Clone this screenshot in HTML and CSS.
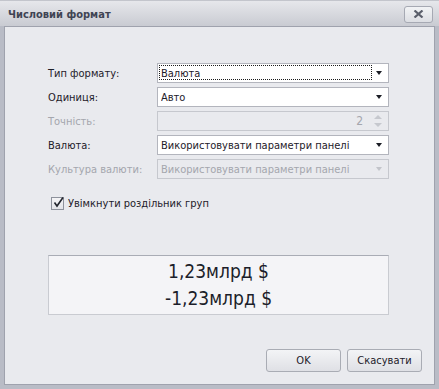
FILE: index.html
```html
<!DOCTYPE html>
<html lang="uk">
<head>
<meta charset="utf-8">
<title>Числовий формат</title>
<link rel="stylesheet" href="styles.css">
</head>
<body>
<div class="window">
  <div class="titlebar">
    <span class="title">Числовий формат</span>
    <button class="close" aria-label="Закрити">
      <svg width="11" height="8" viewBox="0 0 11 8"><path d="M1.5 0.5 L9.5 7.5 M9.5 0.5 L1.5 7.5" stroke="#5b5f6b" stroke-width="2.2" fill="none"/></svg>
    </button>
  </div>
  <div class="client">
    <div class="form">
      <label class="lbl">Тип формату:</label>
      <div class="combo focused"><span class="val">Валюта</span><span class="arrow"></span></div>

      <label class="lbl">Одиниця:</label>
      <div class="combo"><span class="val">Авто</span><span class="arrow"></span></div>

      <label class="lbl disabled">Точність:</label>
      <div class="combo spin disabled"><span class="val num">2</span><span class="spinbtns"><span class="up"></span><span class="down"></span></span></div>

      <label class="lbl">Валюта:</label>
      <div class="combo"><span class="val">Використовувати параметри панелі</span><span class="arrow"></span></div>

      <label class="lbl disabled">Культура валюти:</label>
      <div class="combo disabled"><span class="val">Використовувати параметри панелі</span><span class="arrow"></span></div>
    </div>

    <div class="check">
      <span class="box">
        <svg width="13" height="13" viewBox="0 0 13 13"><path d="M2.5 6.5 L5 10 L11 1.5" stroke="#23262e" stroke-width="1.6" fill="none"/></svg>
      </span>
      <span>Увімкнути роздільник груп</span>
    </div>

    <div class="preview">
      <div>1,23млрд $</div>
      <div>-1,23млрд $</div>
    </div>

    <div class="buttons">
      <button class="btn">OK</button>
      <button class="btn">Скасувати</button>
    </div>
  </div>
</div>
</body>
</html>
```

FILE: styles.css
```css
* { box-sizing: border-box; }
html, body { margin: 0; padding: 0; }
body {
  font-family: "DejaVu Sans Condensed", "DejaVu Sans", sans-serif;
  font-size: 11px;
  color: #1e2029;
  background: #b9bcc6;
}
.window {
  width: 439px;
  height: 389px;
  display: flex;
  flex-direction: column;
  background: #b9bcc6;
  padding: 0 4px 4px 4px;
}
.titlebar {
  height: 26px;
  margin: 0 -4px;
  padding: 0 6px 0 8px;
  display: flex;
  align-items: center;
  justify-content: space-between;
  background: linear-gradient(#e6e7eb, #c9cbd2);
  border-top: 1px solid #c3c5cc;
}
.title {
  font-weight: bold;
  font-size: 11px;
  color: #3f4454;
  padding-top: 1px;
}
.close {
  width: 29px;
  height: 17px;
  margin-top: 1px;
  border: 1px solid #a6a9b3;
  border-radius: 3px;
  background: linear-gradient(#f2f3f5, #dcdee3);
  display: flex;
  align-items: center;
  justify-content: center;
  padding: 0;
}
.client {
  flex: 1;
  border: 1px solid #9fa2ad;
  background: #e9eaee;
  padding: 36px 12px 0 43px;
  display: flex;
  flex-direction: column;
}
.form {
  display: grid;
  grid-template-columns: 109px 232px;
  grid-auto-rows: 20px;
  row-gap: 4px;
}
.lbl {
  display: flex;
  align-items: center;
  color: #1e2029;
}
.lbl.disabled { color: #a4a6ad; }
.combo {
  border: 1px solid #b3b5bd;
  background: #fff;
  display: flex;
  align-items: center;
  padding: 0 6px 0 3px;
  position: relative;
}
.combo .val { flex: 1; white-space: nowrap; overflow: hidden; }
.combo.focused::before {
  content: "";
  position: absolute;
  left: 1px; top: 1px; bottom: 2px; right: 16px;
  border: 1px dotted #1b1b1b;
}
.arrow {
  width: 0; height: 0;
  border-left: 3.5px solid transparent;
  border-right: 3.5px solid transparent;
  border-top: 4px solid #1b1d25;
}
.combo.disabled {
  background: #e9eaee;
  border-color: #c6c8ce;
  color: #a4a6ad;
}
.combo.disabled .arrow { border-top-color: #c2c4ca; }
.num { text-align: right; padding-right: 11px; font-size: 12px; }
.spinbtns {
  display: flex;
  flex-direction: column;
  gap: 4px;
  width: 8px;
}
.spinbtns .up {
  width: 0; height: 0;
  border-left: 4px solid transparent;
  border-right: 4px solid transparent;
  border-bottom: 4px solid #c6c8ce;
}
.spinbtns .down {
  width: 0; height: 0;
  border-left: 4px solid transparent;
  border-right: 4px solid transparent;
  border-top: 4px solid #c6c8ce;
}
.check {
  margin-top: 17px;
  margin-left: 3px;
  display: flex;
  align-items: center;
  gap: 4px;
  height: 14px;
}
.box {
  width: 13px;
  height: 13px;
  border: 1px solid #8e929c;
  background: linear-gradient(#f4f4f6, #e3e4e8);
  display: flex;
  align-items: center;
  justify-content: center;
  position: relative;
}
.box svg { position: absolute; left: 0; top: -2px; }
.preview {
  margin-top: 45px;
  width: 341px;
  height: 60px;
  border: 1px solid #c9cbd1;
  border-top-color: #a9acb5;
  background: #f4f4f7;
  display: flex;
  flex-direction: column;
  align-items: center;
  justify-content: center;
  font-size: 19px;
  line-height: 27px;
  color: #1c1e2a;
}
.buttons {
  margin-top: auto;
  margin-bottom: 12px;
  display: flex;
  justify-content: flex-end;
  gap: 6px;
}
.btn {
  width: 75px;
  height: 23px;
  border: 1px solid #a9acb4;
  border-radius: 3px;
  background: linear-gradient(#f3f4f6, #dfe0e5);
  font-family: inherit;
  font-size: 11px;
  color: #1e2029;
  padding: 0;
}
```
